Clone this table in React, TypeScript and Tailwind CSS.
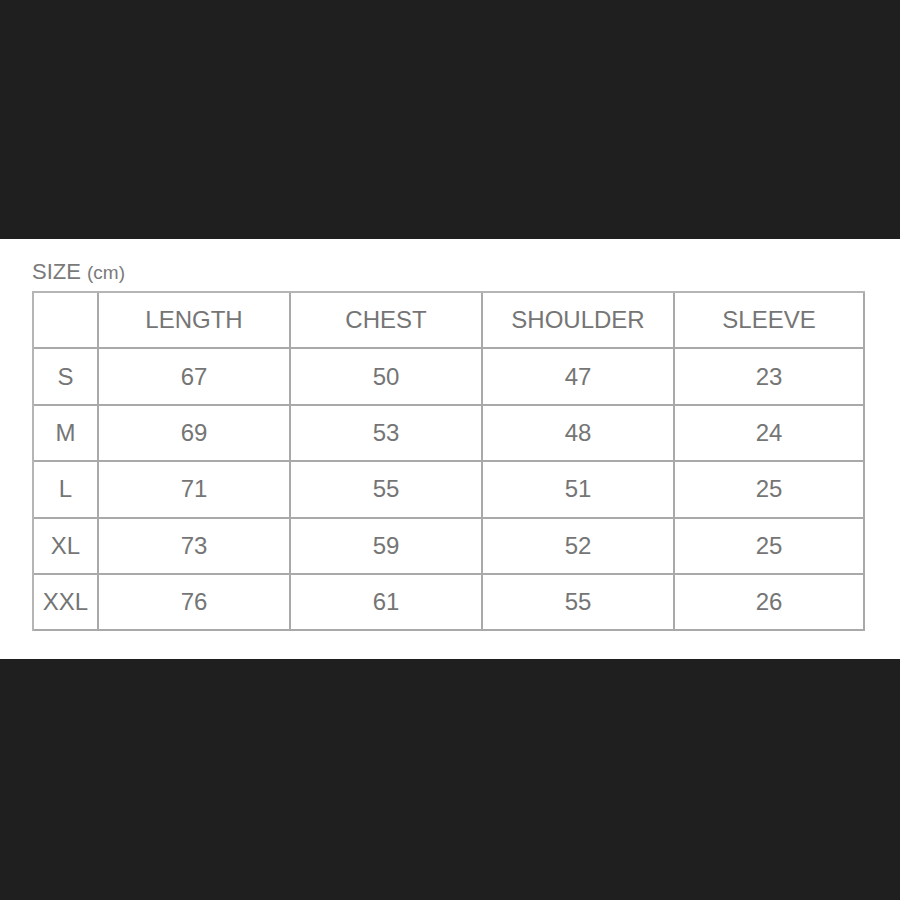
import { Fragment } from 'react';

const headers = ['LENGTH', 'CHEST', 'SHOULDER', 'SLEEVE'];

const rows: [string, number[]][] = [
  ['S', [67, 50, 47, 23]],
  ['M', [69, 53, 48, 24]],
  ['L', [71, 55, 51, 25]],
  ['XL', [73, 59, 52, 25]],
  ['XXL', [76, 61, 55, 26]],
];

function Cell({ children }: { children?: React.ReactNode }) {
  return (
    <div className="h-[56.4px] flex items-center justify-center border-r-2 border-b-2 border-[#a9a9a9] text-[24px] text-[#757575]">
      {children}
    </div>
  );
}

export default function App() {
  return (
    <div
      className="w-[900px] h-[900px] bg-[#1f1f1f] flex flex-col"
      style={{ fontFamily: '"Liberation Sans", Arial, sans-serif' }}
    >
      <div className="h-[239px]" />
      <div className="h-[420px] bg-white pl-[32px] pt-[18px]">
        <div className="text-[22px] leading-[30px] text-[#7a7a7a] mb-[3px]">
          SIZE <span className="text-[19px]">(cm)</span>
        </div>
        <div className="grid grid-cols-[65px_192px_192px_192px_190px] w-[833px] border-l-2 border-t-2 border-[#b5b5b5]">
          <Cell />
          {headers.map((h) => (
            <Cell key={h}>{h}</Cell>
          ))}
          {rows.map(([size, vals]) => (
            <Fragment key={size}>
              <Cell>{size}</Cell>
              {vals.map((v, i) => (
                <Cell key={i}>{v}</Cell>
              ))}
            </Fragment>
          ))}
        </div>
      </div>
    </div>
  );
}
